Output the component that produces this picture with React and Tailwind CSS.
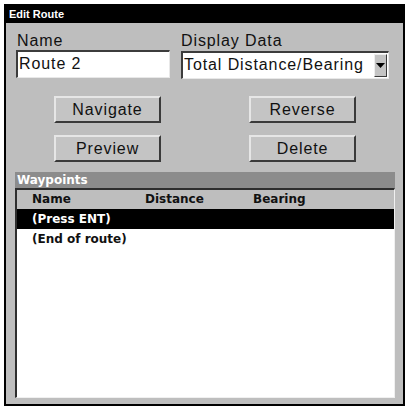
import { ChevronDown } from 'lucide-react';

const ui = { fontFamily: '"Liberation Sans", Arial, sans-serif' };
const mono = { fontFamily: '"DejaVu Sans", Verdana, sans-serif' };

function Button({ label }) {
  return (
    <div
      className="w-[107px] h-[27px] flex items-center justify-center bg-[#c4c4c4] border-t-2 border-l-2 border-t-[#e6e6e6] border-l-[#e6e6e6] border-b-2 border-r-2 border-b-[#3a3a3a] border-r-[#3a3a3a] text-[16px] tracking-[0.9px] text-[#111]"
    >
      {label}
    </div>
  );
}

const waypoints = [
  { name: '(Press ENT)', selected: true },
  { name: '(End of route)', selected: false },
];

export default function App() {
  return (
    <div className="w-[409px] h-[409px] bg-white pt-[4px] pl-[4px]" style={ui}>
      <div className="w-[401px] h-[402px] border-2 border-black bg-[#bebebe] flex flex-col">
        {/* title bar */}
        <div className="h-[18px] bg-black text-white text-[11px] font-bold leading-[18px] pl-[3px] -mt-[1px]">
          Edit Route
        </div>

        {/* name + display data */}
        <div className="flex pl-[10px] mt-[9px]">
          <div className="w-[154px] flex flex-col">
            <span className="text-[16px] leading-[18px] tracking-[0.9px] pl-[1px] text-[#111]">Name</span>
            <div className="h-[28px] bg-white border-t-2 border-l-2 border-[#3c3c3c] border-b border-r border-b-[#e8e8e8] border-r-[#e8e8e8] text-[16px] leading-[24px] tracking-[0.9px] pl-[1px] text-[#111]">
              Route 2
            </div>
          </div>
          <div className="ml-[11px] w-[208px] flex flex-col">
            <span className="text-[16px] leading-[18px] tracking-[0.9px] text-[#111]">Display Data</span>
            <div className="mt-[1px] h-[28px] flex bg-white border-t-2 border-l-2 border-[#3c3c3c] border-b border-r border-b-[#e8e8e8] border-r-[#e8e8e8]">
              <span className="flex-1 text-[16px] leading-[24px] tracking-[0.9px] pl-[1px] text-[#111] whitespace-nowrap overflow-hidden">
                Total Distance/Bearing
              </span>
              <div className="w-[13px] my-[1px] mr-[1px] bg-[#c4c4c4] border-t border-l border-[#eeeeee] border-b border-r border-b-[#3a3a3a] border-r-[#3a3a3a] flex items-center justify-center">
                <svg width="9" height="6" viewBox="0 0 9 6">
                  <path d="M0 0h9L4.5 5z" fill="#000" />
                </svg>
              </div>
            </div>
          </div>
        </div>

        {/* buttons */}
        <div className="flex pl-[48px] gap-[88px] mt-[17px]">
          <Button label="Navigate" />
          <Button label="Reverse" />
        </div>
        <div className="flex pl-[48px] gap-[88px] mt-[12px]">
          <Button label="Preview" />
          <Button label="Delete" />
        </div>

        {/* waypoints list */}
        <div className="mx-[9px] mt-[10px] w-[380px] flex flex-col" style={mono}>
          <div className="h-[16px] bg-[#8c8c8c] text-white text-[12px] font-bold leading-[16px] pl-[2px]">
            Waypoints
          </div>
          <div className="h-[210px] bg-white border-t-2 border-l-2 border-[#2e2e2e] border-b border-r border-b-[#f0f0f0] border-r-[#f0f0f0] flex flex-col">
            <div className="h-[19px] bg-[#bebebe] grid grid-cols-[113px_108px_1fr] pl-[15px] text-[12px] font-bold leading-[19px] text-[#111]">
              <span>Name</span>
              <span>Distance</span>
              <span>Bearing</span>
            </div>
            {waypoints.map((w) => (
              <div
                key={w.name}
                className={`h-[20px] pl-[15px] text-[12px] font-bold leading-[20px] ${
                  w.selected ? 'bg-black text-white' : 'bg-white text-[#111]'
                }`}
              >
                {w.name}
              </div>
            ))}
          </div>
        </div>
      </div>
    </div>
  );
}
